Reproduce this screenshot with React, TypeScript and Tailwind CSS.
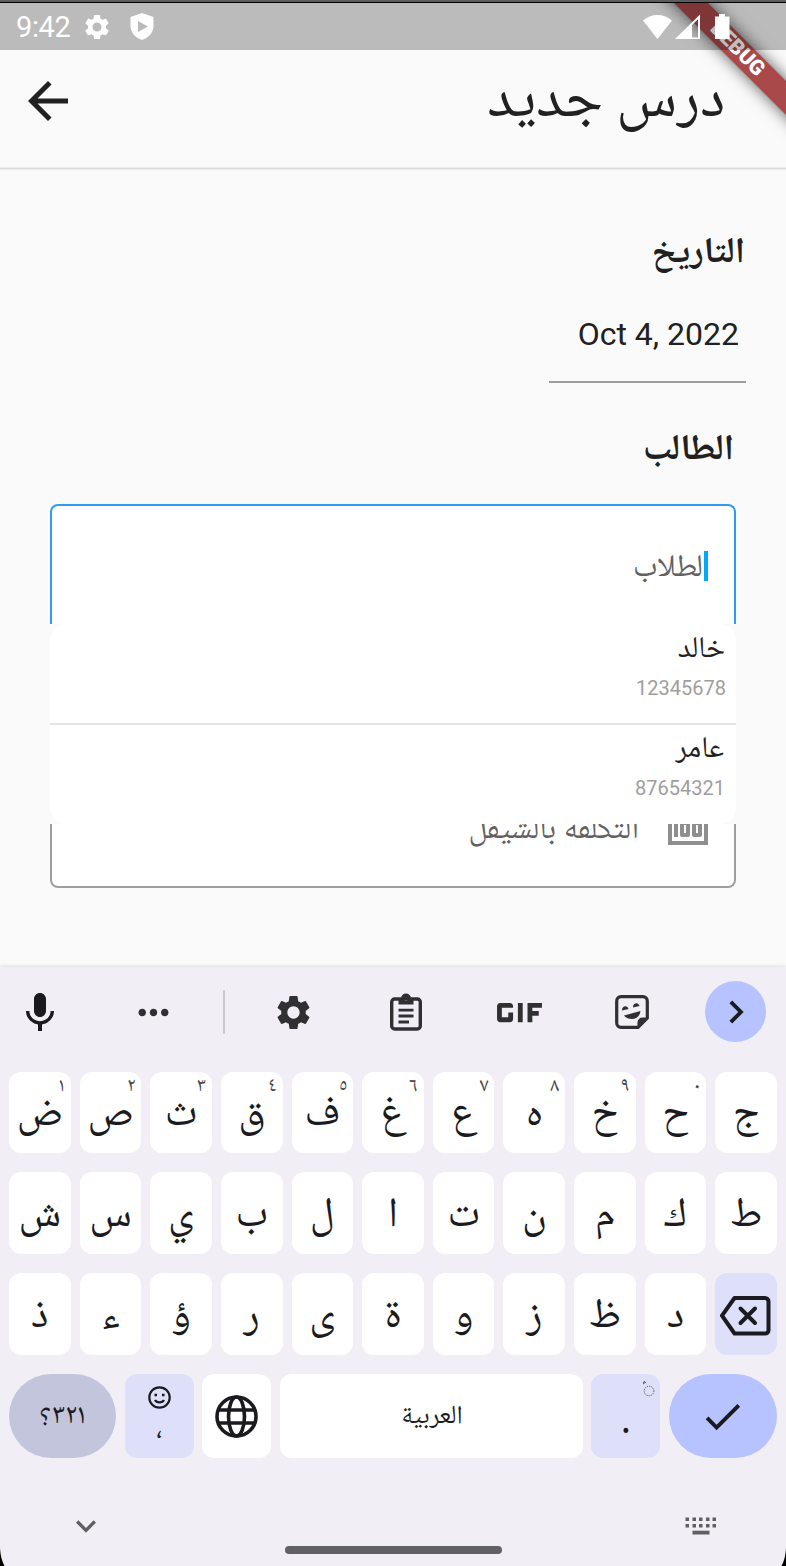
import React from "react";
import {
  MdSettings,
  MdArrowBack,
  MdMic,
  MdMoreHoriz,
  MdChevronRight,
  MdCheck,
  MdExpandMore,
  MdMoney,
  MdGif,
} from "react-icons/md";

const ARABIC =
  "font-['Noto_Naskh_Arabic_UI','Noto_Naskh_Arabic','Noto_Sans_Arabic','DejaVu_Sans',sans-serif]";

const rowOne = [
  ["ض", "١"], ["ص", "٢"], ["ث", "٣"], ["ق", "٤"], ["ف", "٥"], ["غ", "٦"],
  ["ع", "٧"], ["ه", "٨"], ["خ", "٩"], ["ح", "٠"], ["ج", ""],
];
const rowTwo = ["ش", "س", "ي", "ب", "ل", "ا", "ت", "ن", "م", "ك", "ط"];
const rowThree = ["ذ", "ء", "ؤ", "ر", "ى", "ة", "و", "ز", "ظ", "د"];

function Key({ letter, hint }: { letter: string; hint?: string }) {
  return (
    <div className="relative flex justify-center rounded-xl bg-white text-[#1b1b1f]">
      <span className={`text-[42px] leading-[72px] ${hint === undefined ? "mt-[8px]" : "mt-[7px]"}`}>{letter}</span>
      {hint ? (
        <span className="absolute top-[4px] right-[6px] text-[20px] leading-[22px] text-[#46464a]">{hint}</span>
      ) : null}
    </div>
  );
}

function StatusBar() {
  return (
    <div className="absolute inset-x-0 top-0 flex h-[50px] flex-col bg-black/25 text-white">
      <div className="h-[2px] bg-[#5c5c5c]" />
      <div className="h-[1px] bg-black" />
      <div className="flex grow items-center pl-4">
        <span className="mt-[2px] w-[56px] text-[29px] leading-none tracking-[-0.4px]">9:42</span>
        <MdSettings className="ml-[10px] size-[30px]" />
        <svg className="ml-[17px] h-[29px] w-[26px]" viewBox="0 0 26 29">
          <path fillRule="evenodd" fill="white" d="M13 1 L24.500 5 V14 C24.500 21 19 26 13 28 C7 26 1.500 21 1.500 14 V5Z M9 9V20L19 14.500Z" />
        </svg>
        <svg className="ml-[487px] h-[26px] w-[90px]" viewBox="0 0 90 26" fill="white">
          <path d="M1 6.500 C9 -1 22 -1 30 6.500 L15.500 25Z" />
          <path fillRule="evenodd" d="M33 25 L58 0.500 V25Z M50 11 V23.500 H56 V5.300Z" />
          <path d="M77 0h6v2.500h4.500V25H73V2.500h4z" />
        </svg>
      </div>
    </div>
  );
}

function StickerIcon() {
  return (
    <svg className="size-[34px]" viewBox="0 0 34 34" fill="none">
      <path d="M6 1.700h22a4.300 4.300 0 0 1 4.300 4.300v17L23 32.300H6a4.300 4.300 0 0 1-4.300-4.300V6A4.300 4.300 0 0 1 6 1.700z" stroke="#303033" strokeWidth="3.200" />
      <path d="M33 22.500h-5.500a5 5 0 0 0-5 5V33z" fill="#303033" />
      <path d="M9 20.500 25.500 16c-.5 5-4 8-8.500 8-3.500 0-6.500-1.500-8-3.500zM7 15.500c-.3-5 5.500-6 6.500-1.500zM18 12.500c-.3-5 5.500-6 6.500-1.500z" fill="#303033" />
    </svg>
  );
}

function ClipboardIcon() {
  return (
    <svg className="h-[38px] w-[32px]" viewBox="0 0 32 38" fill="none">
      <rect x="1.700" y="6" width="28.600" height="30" rx="3" stroke="#303033" strokeWidth="3.400" />
      <path fillRule="evenodd" d="M8.500 11.500V5.500h2.500a5 5 0 0 1 10 0H23.500v6zM16 4.700a1.700 1.700 0 1 0 0 3.400 1.700 1.700 0 0 0 0-3.400z" fill="#303033" />
      <path d="M8.500 17.200h15M8.500 23h15M8.500 29h10.500" stroke="#303033" strokeWidth="2.800" />
    </svg>
  );
}

function BackspaceIcon() {
  return (
    <svg className="mt-[3px] mr-[2px] h-[42px] w-[52px] shrink-0" viewBox="0 0 52 42" fill="none" stroke="#1b1b1f" strokeWidth="4" strokeLinejoin="round" strokeLinecap="round">
      <path d="M15.500 3H46a3.500 3.500 0 0 1 3.500 3.500v29A3.500 3.500 0 0 1 46 38.500H15.500L3 20.700z" />
      <path d="m21.500 13.500 14.500 14.500m0-14.500-14.500 14.500" />
    </svg>
  );
}

function GlobeIcon() {
  return (
    <svg className="size-[43px]" viewBox="0 0 43 43" fill="none" stroke="#1b1b1f" strokeWidth="3.600">
      <circle cx="21.500" cy="21.500" r="19.500" />
      <ellipse cx="21.500" cy="21.500" rx="8" ry="19.500" />
      <path d="M3 15h37M3 28h37" />
    </svg>
  );
}

export default function App() {
  return (
    <div className="relative flex h-[1566px] w-[786px] flex-col overflow-hidden bg-[#fafafa] font-[Roboto,sans-serif] text-[#212121]">
      <header className="flex h-[167px] shrink-0 items-start justify-between pt-[71px] pr-[61px] pl-[18px]">
        <MdArrowBack className="size-[60px]" />
        <h1 dir="rtl" className={`${ARABIC} text-[60px] leading-[60px]`}>درس جديد</h1>
      </header>
      <div className="h-[3px] shrink-0 border-y border-[#ececec] bg-[#dcdcdc]" />

      <main dir="rtl" className="flex h-[797px] shrink-0 flex-col items-start">
        <h2 className={`${ARABIC} mt-[60px] mr-[41px] text-[36px] leading-[48px] font-bold`}>التاريخ</h2>
        <div className="mt-[18px] mr-[40px] flex h-[87px] w-[197px] items-start border-b-2 border-[#9e9e9e] pt-[20px] pr-[7px]">
          <span dir="ltr" className="text-[32px] leading-[36px]">Oct 4, 2022</span>
        </div>
        <h2 className={`${ARABIC} mt-[44px] mr-[52px] text-[36px] leading-[48px] font-bold`}>الطالب</h2>

        <div className="mt-[29px] mr-[50px] flex w-[686px] flex-col">
          <div className="flex h-[120px] items-start rounded-t-[8px] border-x-2 border-t-2 border-[#2f9bf3] bg-white pt-[45px] pr-[26px]">
            <i className="h-[30px] w-[4px] bg-[#03a9f4]" />
            <span className={`${ARABIC} mr-[1px] text-[31.500px] leading-[34px] text-[#616161]`}>لطلاب</span>
          </div>
          <div className="h-[200px] bg-[#fafafa]">
            <div className="h-[200px] rounded-2xl bg-white">
              <div className="flex h-[101px] flex-col items-start border-b-2 border-[#e4e4e4] pr-[10px]">
                <span className={`${ARABIC} mt-[8px] mr-[1px] text-[30px] leading-[36px]`}>خالد</span>
                <span className="mt-[8px] text-[20px] leading-[24px] text-[#9e9e9e]">12345678</span>
              </div>
              <div className="flex h-[99px] flex-col items-start pr-[11px]">
                <span className={`${ARABIC} mt-[7px] mr-[1px] text-[30px] leading-[36px]`}>عامر</span>
                <span className="mt-[8px] text-[20px] leading-[24px] text-[#9e9e9e]">87654321</span>
              </div>
            </div>
          </div>
          <div className="flex h-[64px] items-start overflow-hidden rounded-b-[8px] border-x-2 border-b-2 border-[#9e9e9e] bg-white pr-[22px]">
            <MdMoney className="mt-[-19px] size-[48px] shrink-0 text-[#8e8e8e]" />
            <span className={`${ARABIC} mt-[-14px] mr-[25px] text-[32px] leading-[40px] whitespace-nowrap text-[#616161]`}>التكلفة بالشيقل</span>
          </div>
        </div>
      </main>

      <section className="flex grow flex-col bg-[#f1eff5] shadow-[0_-1px_3px_rgba(0,0,0,0.12)]">
        <div className="flex h-[91px] items-center text-[#303033]">
          <MdMic className="ml-[16px] size-[48px] text-[#1b1b1f]" />
          <MdMoreHoriz className="ml-[67px] size-[45px]" />
          <div className="mb-[2px] ml-[46.500px] h-[44px] w-[2px] bg-[#c9c8cd]" />
          <MdSettings className="mb-[1px] ml-[48.500px] size-[41px]" />
          <div className="mb-[2px] ml-[76px]"><ClipboardIcon /></div>
          <MdGif className="mb-[1px] ml-[58.500px] size-[77px]" />
          <div className="mb-[1px] ml-[57.500px]"><StickerIcon /></div>
          <div className="mb-[2px] ml-[56px] flex size-[61px] items-center justify-center rounded-full bg-[#b7c3ff] text-[#1b1b1f]">
            <MdChevronRight className="size-[46px]" />
          </div>
        </div>

        <div className={`${ARABIC} mt-[14px] flex flex-col gap-[19px] px-[9px]`}>
          <div className="grid h-[81px] grid-cols-11 gap-[9px]">
            {rowOne.map(([l, h]) => <Key key={l} letter={l} hint={h} />)}
          </div>
          <div className="grid h-[82px] grid-cols-11 gap-[9px]">
            {rowTwo.map((l) => <Key key={l} letter={l} />)}
          </div>
          <div className="grid h-[82px] grid-cols-11 gap-[9px]">
            {rowThree.map((l) => <Key key={l} letter={l} />)}
            <div className="flex items-center justify-center rounded-xl bg-[#dee0fa]"><BackspaceIcon /></div>
          </div>
          <div className="flex h-[84px] justify-between text-[#1b1b1f]">
            <div dir="rtl" className="flex w-[107px] items-center justify-center rounded-[42px] bg-[#c3c5dd] pt-[1px] text-[28.500px]">٣٢١؟</div>
            <div className="flex w-[69px] flex-col items-center rounded-xl bg-[#dee0fa] pt-[12px]">
              <svg className="size-[23px]" viewBox="0 0 23 23" fill="none" stroke="#1b1b1f" strokeWidth="2.200">
                <circle cx="11.500" cy="11.500" r="10.200" />
                <path d="M7 14c1.500 3.200 7.500 3.200 9 0" />
                <path d="M6.500 9h2.500M14 9h2.500" strokeWidth="2.600" />
              </svg>
              <span className="mt-[5px] text-[28px] leading-[30px]">،</span>
            </div>
            <div className="flex w-[69px] items-center justify-center rounded-xl bg-white"><GlobeIcon /></div>
            <div dir="rtl" className="flex w-[303px] items-center justify-center rounded-xl bg-white pt-[2px] pl-[1px] text-[26px]">العربية</div>
            <div className="relative flex w-[69px] justify-center rounded-xl bg-[#dee0fa] pt-[24px]">
              <span className="text-[38px] leading-[50px]">.</span>
              <svg className="absolute top-[7px] right-[5px] h-[16px] w-[13px]" viewBox="0 0 13 16" fill="none" stroke="#46464a">
                <circle cx="7" cy="10" r="4.800" strokeWidth="1" strokeDasharray="1 1" />
                <path d="M1 3 4 1M1 1.500 3 .5" strokeWidth=".9" />
              </svg>
            </div>
            <div className="flex w-[108px] items-center justify-center rounded-[42px] bg-[#b7c3ff]"><MdCheck className="size-[47px]" /></div>
          </div>
        </div>

        <div className="mt-[48px] flex items-center justify-between pr-[69px] pl-[66px] text-[#606062]">
          <MdExpandMore className="size-[40px]" />
          <svg className="h-[18px] w-[32px]" viewBox="0 0 32 18" fill="currentColor">
            {[0, 7, 13.5, 20.5, 27].map((x) => (
              <React.Fragment key={x}>
                <rect x={x + 0.5} y="0.500" width="3.500" height="3.500" />
                <rect x={x + 0.5} y="7" width="3.500" height="3.500" />
              </React.Fragment>
            ))}
            <rect x="7.500" y="13.700" width="17" height="3.800" />
          </svg>
        </div>
        <div className="mx-auto h-[8px] w-[217px] rounded-full bg-[#616163]" />
      </section>

      <svg className="absolute bottom-0 left-0 h-[18px] w-[5px]" viewBox="0 0 5 18">
        <path d="M0 0C.5 8 2 13 4.500 18H0z" fill="black" />
      </svg>
      <svg className="absolute right-0 bottom-0 h-[18px] w-[5px]" viewBox="0 0 5 18">
        <path d="M5 0C4.500 8 3 13 .5 18H5z" fill="black" />
      </svg>

      <div className="absolute top-0 right-0 size-[200px] overflow-hidden">
        <div className="absolute top-[39.500px] left-[4px] flex h-[24px] w-[300px] rotate-45 items-center justify-center bg-[#a94949] pr-[8px] pb-[1px] shadow-[0_0_16px_rgba(0,0,0,0.65)]">
          <span className="text-[21px] leading-none font-black text-white">DEBUG</span>
        </div>
      </div>
      <StatusBar />
    </div>
  );
}
